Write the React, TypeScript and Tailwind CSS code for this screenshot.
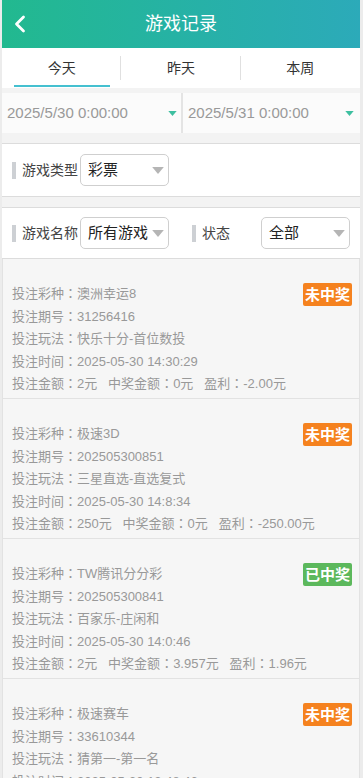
import { ChevronLeft } from 'lucide-react';

type Record = {
  game: string;
  issue: string;
  play: string;
  time: string;
  bet: string;
  win: string;
  profit: string;
  won: boolean;
};

const records: Record[] = [
  { game: '澳洲幸运8', issue: '31256416', play: '快乐十分-首位数投', time: '2025-05-30 14:30:29', bet: '2元', win: '0元', profit: '-2.00元', won: false },
  { game: '极速3D', issue: '202505300851', play: '三星直选-直选复式', time: '2025-05-30 14:8:34', bet: '250元', win: '0元', profit: '-250.00元', won: false },
  { game: 'TW腾讯分分彩', issue: '202505300841', play: '百家乐-庄闲和', time: '2025-05-30 14:0:46', bet: '2元', win: '3.957元', profit: '1.96元', won: true },
  { game: '极速赛车', issue: '33610344', play: '猜第一-第一名', time: '2025-05-30 13:48:46', bet: '2元', win: '0元', profit: '-2.00元', won: false },
];

function Caret({ className }: { className: string }) {
  return (
    <svg viewBox="0 0 10 6" className={className}>
      <path d="M0 0h10L5 6z" fill="currentColor" />
    </svg>
  );
}

function Select({ value }: { value: string }) {
  return (
    <div className="flex h-[32px] w-[89px] items-center justify-between rounded-[5px] border border-[#cfcfcf] bg-white pl-[7px] pr-[4px]">
      <span className="text-[15px] text-[#222]">{value}</span>
      <Caret className="h-[7px] w-[12px] text-[#b5b5b5]" />
    </div>
  );
}

function Label({ text }: { text: string }) {
  return (
    <div className="flex items-center">
      <span className="h-[17px] w-[4px] bg-[#cdd0d4]" />
      <span className="ml-[6px] text-[14px] text-[#444]">{text}</span>
    </div>
  );
}

// full-width colon, centred the way the reference font draws it
function Colon() {
  return <span style={{ fontFamily: '"Noto Sans CJK TC", sans-serif' }}>：</span>;
}

function Field({ label, value }: { label: string; value: string }) {
  return (
    <>
      {label}
      <Colon />
      {value}
    </>
  );
}

export default function App() {
  return (
    <div
      className="min-h-[778px] bg-[#ececec] pl-[2px] pr-[3px]"
      style={{ fontFamily: '"Liberation Sans", "Noto Sans CJK SC", sans-serif' }}
    >
      <header className="relative flex h-[48px] items-center justify-center bg-gradient-to-r from-[#22b98f] to-[#2caab9]">
        <ChevronLeft className="absolute left-[4px] top-[10px] h-[28px] w-[28px] text-white" strokeWidth={2.4} />
        <h1 className="text-[18px] text-white">游戏记录</h1>
      </header>

      <nav className="flex h-[40px] bg-white">
        {['今天', '昨天', '本周'].map((t, i) => (
          <div key={t} className="relative flex flex-1 items-center justify-center">
            <span className="text-[14px] text-[#333]">{t}</span>
            {i < 2 && <span className="absolute right-0 top-[8px] h-[24px] w-px bg-[#e0e0e0]" />}
            {i === 0 && <span className="absolute bottom-[1px] left-[12px] h-[2px] w-[96px] bg-[#45c0d0]" />}
          </div>
        ))}
      </nav>

      <div className="h-[5px] bg-[#f3f3f3]" />

      <div className="flex h-[40px] bg-[#fbfbfb]">
        <div className="flex w-[181px] items-center justify-between border-r-2 border-[#e4e4e4] pl-[5px] pr-[4px]">
          <span className="text-[15px] text-[#999]">2025/5/30 0:00:00</span>
          <Caret className="h-[5px] w-[9px] text-[#3ebfa0]" />
        </div>
        <div className="flex flex-1 items-center justify-between pl-[5px] pr-[6px]">
          <span className="text-[15px] text-[#999]">2025/5/31 0:00:00</span>
          <Caret className="h-[5px] w-[9px] text-[#3ebfa0]" />
        </div>
      </div>

      <div className="h-[10px] bg-[#f3f3f3]" />

      <div className="flex h-[54px] items-center gap-[2px] border-y border-[#dcdcdc] bg-white pl-[10px]">
        <Label text="游戏类型" />
        <Select value="彩票" />
      </div>

      <div className="h-[10px] bg-[#f3f3f3]" />

      <div className="flex h-[52px] items-center border-y border-[#dcdcdc] bg-white pl-[10px]">
        <Label text="游戏名称" />
        <div className="ml-[2px]">
          <Select value="所有游戏" />
        </div>
        <div className="ml-[23px]">
          <Label text="状态" />
        </div>
        <div className="ml-[31px]">
          <Select value="全部" />
        </div>
      </div>

      <div className="bg-[#f3f3f3]">
        {records.map((r) => (
          <div key={r.issue} className="relative h-[140px] border-x border-b border-[#e2e2e2] bg-[#f6f6f6] pl-[9px] pt-[23px] text-[13px] leading-[21.5px] text-[#999]">
            <span
              className={`absolute right-[7px] top-[24px] flex h-[23px] w-[49px] items-center justify-center rounded-[2px] text-[15px] font-bold text-white ${r.won ? 'bg-[#5cb85c]' : 'bg-[#f5821f]'}`}
            >
              {r.won ? '已中奖' : '未中奖'}
            </span>
            <div><Field label="投注彩种" value={r.game} /></div>
            <div><Field label="投注期号" value={r.issue} /></div>
            <div><Field label="投注玩法" value={r.play} /></div>
            <div><Field label="投注时间" value={r.time} /></div>
            <div className="whitespace-pre">
              <Field label="投注金额" value={r.bet} />{'   '}
              <Field label="中奖金额" value={r.win} />{'   '}
              <Field label="盈利" value={r.profit} />
            </div>
          </div>
        ))}
      </div>
    </div>
  );
}
